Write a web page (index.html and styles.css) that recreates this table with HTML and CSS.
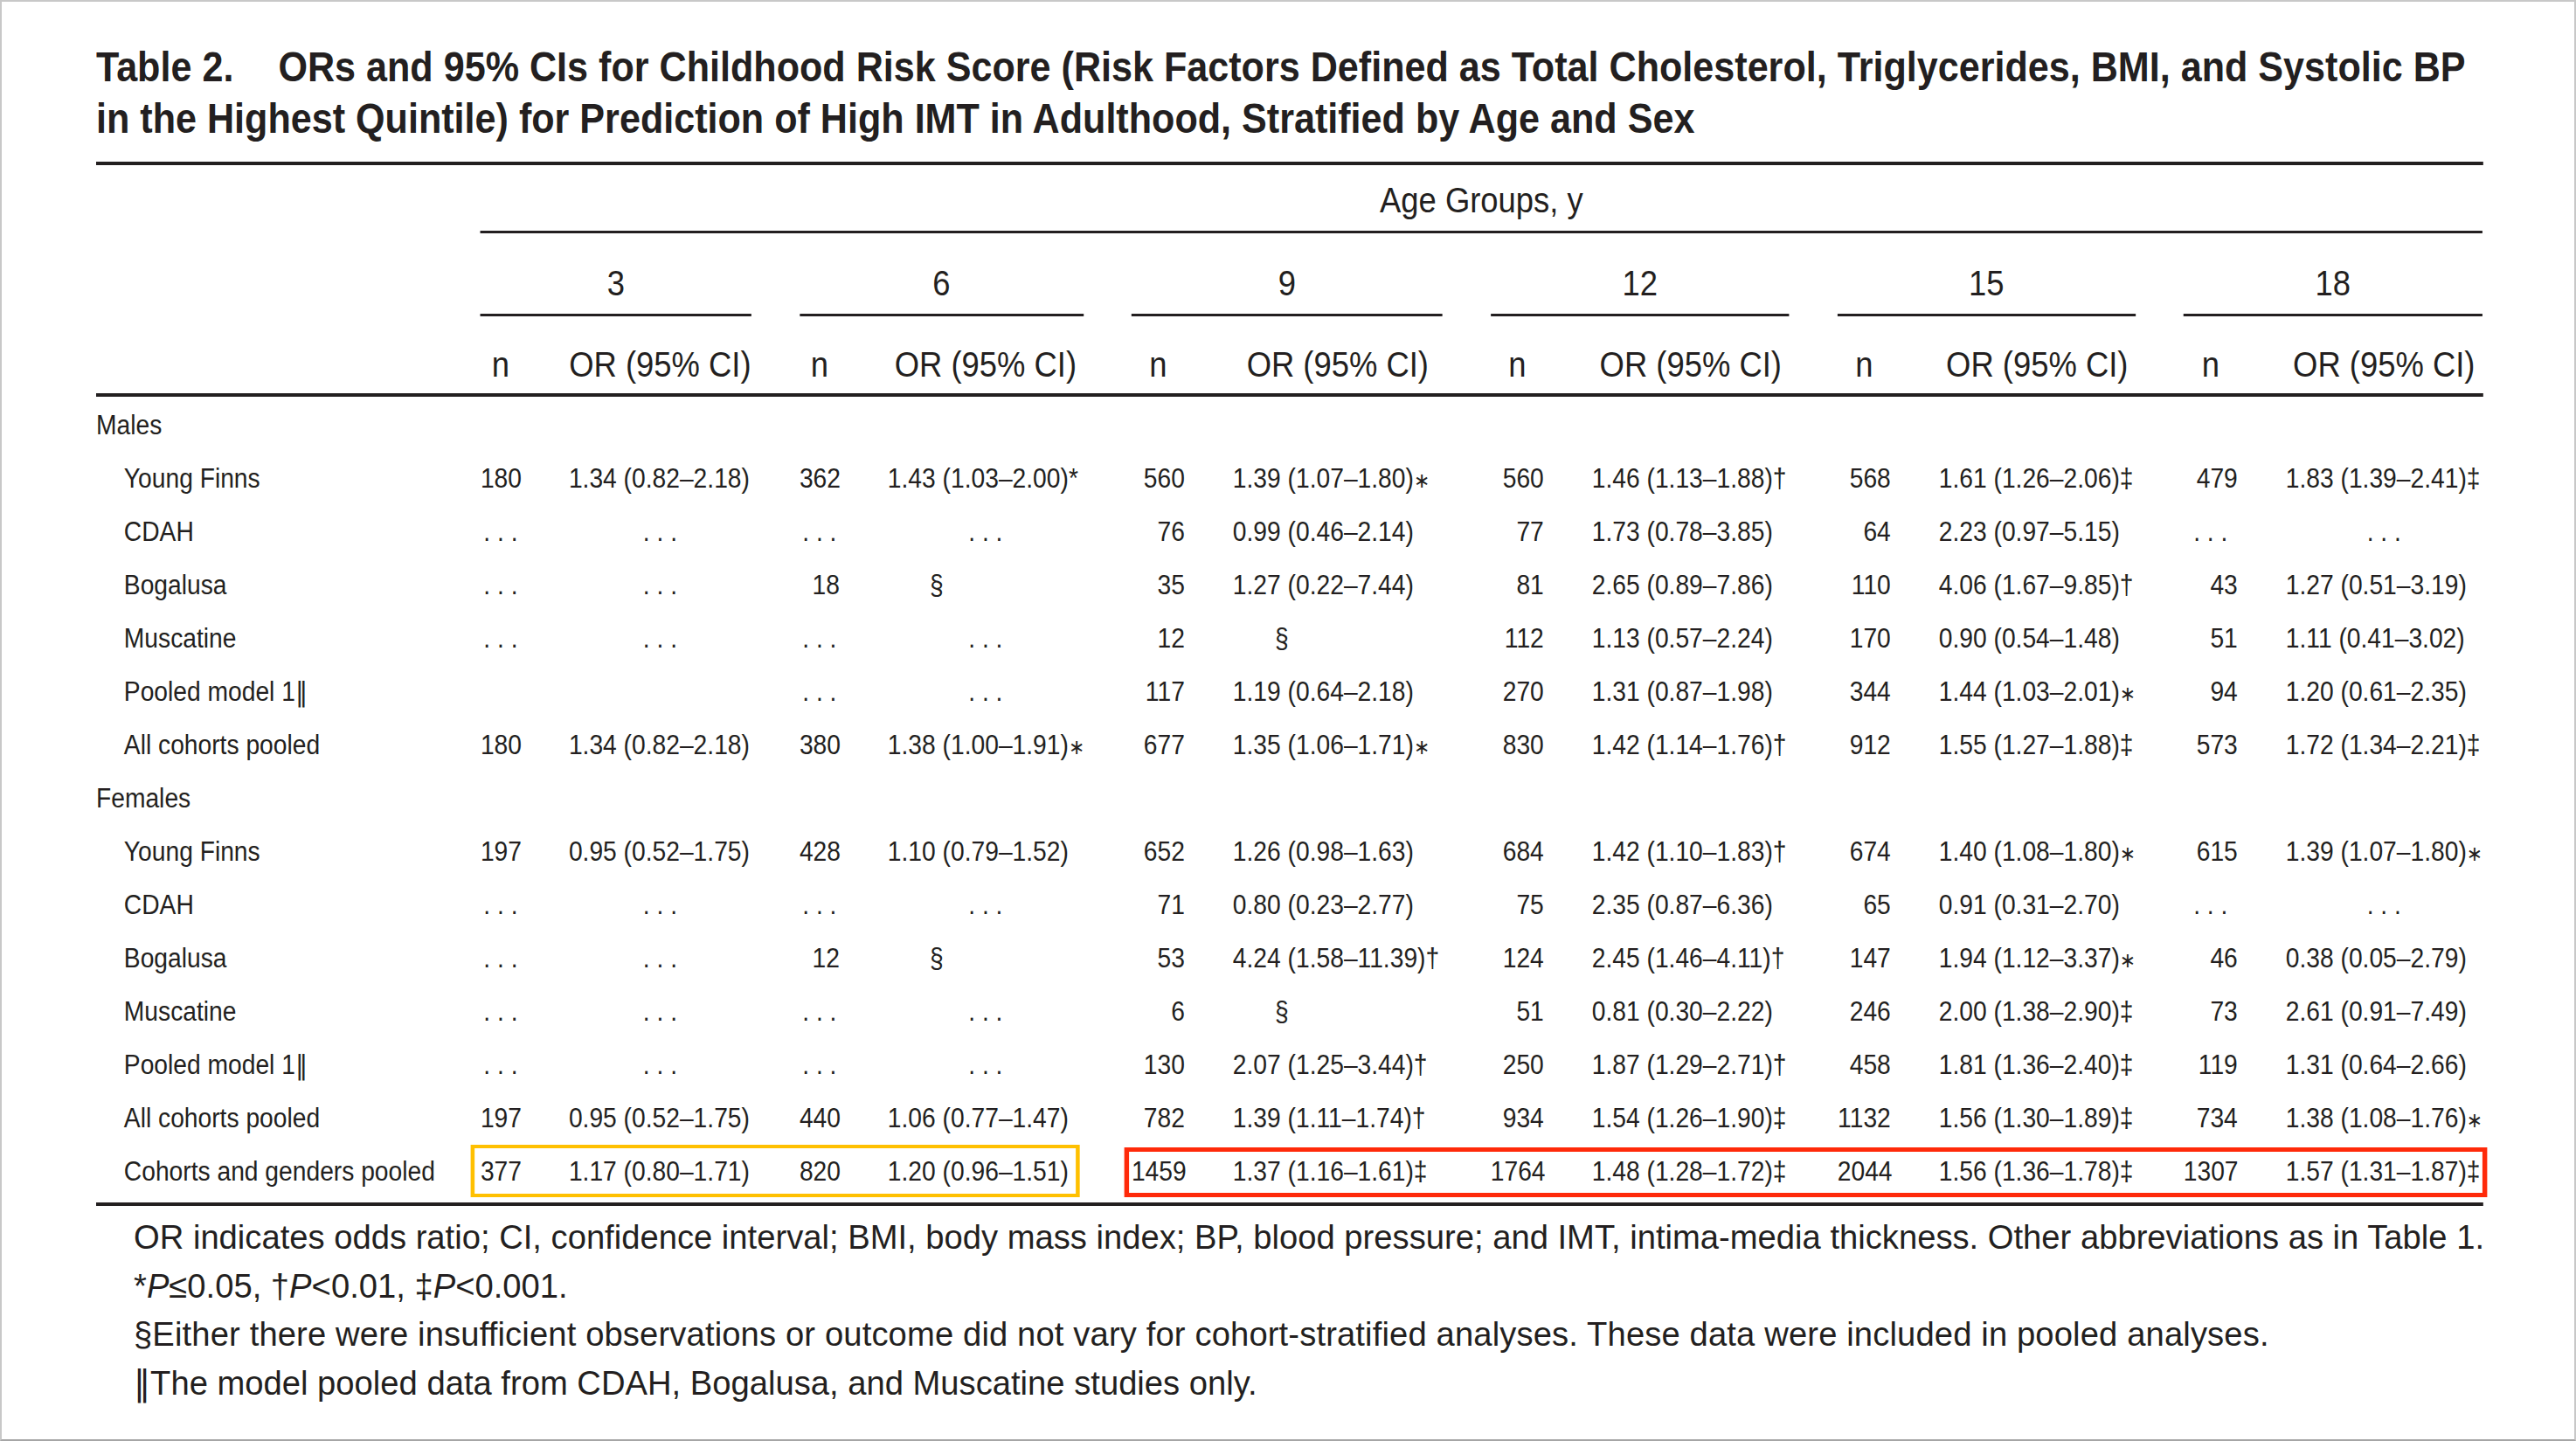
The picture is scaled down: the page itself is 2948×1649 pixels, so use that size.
FILE: index.html
```html
<!DOCTYPE html>
<html lang="en">
<head>
<meta charset="utf-8">
<title>Table 2</title>
<link rel="stylesheet" href="styles.css">
</head>
<body>
<div class="page">
  <h1 class="title">Table 2.<span class="tgap"></span>ORs and 95% CIs for Childhood Risk Score (Risk Factors Defined as Total Cholesterol, Triglycerides, BMI, and Systolic BP<br>in the Highest Quintile) for Prediction of High IMT in Adulthood, Stratified by Age and Sex</h1>

  <div class="table">
    <div class="row hdr-top">
      <div></div>
      <div class="span-all">Age Groups, y</div>
    </div>
    <div class="row hdr-age">
      <div></div>
      <div class="age">3</div>
      <div class="age">6</div>
      <div class="age">9</div>
      <div class="age">12</div>
      <div class="age">15</div>
      <div class="age">18</div>
    </div>
    <div class="row hdr-col">
      <div></div>
      <div class="ch">n</div><div class="ch">OR (95% CI)</div>
      <div class="ch">n</div><div class="ch">OR (95% CI)</div>
      <div class="ch">n</div><div class="ch">OR (95% CI)</div>
      <div class="ch">n</div><div class="ch">OR (95% CI)</div>
      <div class="ch">n</div><div class="ch">OR (95% CI)</div>
      <div class="ch">n</div><div class="ch">OR (95% CI)</div>
    </div>

    <div class="tbody">
      <div class="row"><div class="grp">Males</div></div>
      <div class="row">
        <div class="lbl">Young Finns</div>
        <div class="n">180</div><div class="or">1.34 (0.82–2.18)</div>
        <div class="n">362</div><div class="or">1.43 (1.03–2.00)*</div>
        <div class="n">560</div><div class="or">1.39 (1.07–1.80)<span class="ast">∗</span></div>
        <div class="n">560</div><div class="or">1.46 (1.13–1.88)†</div>
        <div class="n">568</div><div class="or">1.61 (1.26–2.06)‡</div>
        <div class="n">479</div><div class="or">1.83 (1.39–2.41)‡</div>
      </div>
      <div class="row">
        <div class="lbl">CDAH</div>
        <div class="n dots">.&nbsp;.&nbsp;.</div><div class="or dots">.&nbsp;.&nbsp;.</div>
        <div class="n dots">.&nbsp;.&nbsp;.</div><div class="or dots">.&nbsp;.&nbsp;.</div>
        <div class="n">76</div><div class="or">0.99 (0.46–2.14)</div>
        <div class="n">77</div><div class="or">1.73 (0.78–3.85)</div>
        <div class="n">64</div><div class="or">2.23 (0.97–5.15)</div>
        <div class="n dots">.&nbsp;.&nbsp;.</div><div class="or dots">.&nbsp;.&nbsp;.</div>
      </div>
      <div class="row">
        <div class="lbl">Bogalusa</div>
        <div class="n dots">.&nbsp;.&nbsp;.</div><div class="or dots">.&nbsp;.&nbsp;.</div>
        <div class="n">18</div><div class="or sect">§</div>
        <div class="n">35</div><div class="or">1.27 (0.22–7.44)</div>
        <div class="n">81</div><div class="or">2.65 (0.89–7.86)</div>
        <div class="n">110</div><div class="or">4.06 (1.67–9.85)†</div>
        <div class="n">43</div><div class="or">1.27 (0.51–3.19)</div>
      </div>
      <div class="row">
        <div class="lbl">Muscatine</div>
        <div class="n dots">.&nbsp;.&nbsp;.</div><div class="or dots">.&nbsp;.&nbsp;.</div>
        <div class="n dots">.&nbsp;.&nbsp;.</div><div class="or dots">.&nbsp;.&nbsp;.</div>
        <div class="n">12</div><div class="or sect">§</div>
        <div class="n">112</div><div class="or">1.13 (0.57–2.24)</div>
        <div class="n">170</div><div class="or">0.90 (0.54–1.48)</div>
        <div class="n">51</div><div class="or">1.11 (0.41–3.02)</div>
      </div>
      <div class="row">
        <div class="lbl">Pooled model 1<span class="dbar">‖</span></div>
        <div class="n"></div><div class="or"></div>
        <div class="n dots">.&nbsp;.&nbsp;.</div><div class="or dots">.&nbsp;.&nbsp;.</div>
        <div class="n">117</div><div class="or">1.19 (0.64–2.18)</div>
        <div class="n">270</div><div class="or">1.31 (0.87–1.98)</div>
        <div class="n">344</div><div class="or">1.44 (1.03–2.01)<span class="ast">∗</span></div>
        <div class="n">94</div><div class="or">1.20 (0.61–2.35)</div>
      </div>
      <div class="row">
        <div class="lbl">All cohorts pooled</div>
        <div class="n">180</div><div class="or">1.34 (0.82–2.18)</div>
        <div class="n">380</div><div class="or">1.38 (1.00–1.91)<span class="ast">∗</span></div>
        <div class="n">677</div><div class="or">1.35 (1.06–1.71)<span class="ast">∗</span></div>
        <div class="n">830</div><div class="or">1.42 (1.14–1.76)†</div>
        <div class="n">912</div><div class="or">1.55 (1.27–1.88)‡</div>
        <div class="n">573</div><div class="or">1.72 (1.34–2.21)‡</div>
      </div>

      <div class="row"><div class="grp">Females</div></div>
      <div class="row">
        <div class="lbl">Young Finns</div>
        <div class="n">197</div><div class="or">0.95 (0.52–1.75)</div>
        <div class="n">428</div><div class="or">1.10 (0.79–1.52)</div>
        <div class="n">652</div><div class="or">1.26 (0.98–1.63)</div>
        <div class="n">684</div><div class="or">1.42 (1.10–1.83)†</div>
        <div class="n">674</div><div class="or">1.40 (1.08–1.80)<span class="ast">∗</span></div>
        <div class="n">615</div><div class="or">1.39 (1.07–1.80)<span class="ast">∗</span></div>
      </div>
      <div class="row">
        <div class="lbl">CDAH</div>
        <div class="n dots">.&nbsp;.&nbsp;.</div><div class="or dots">.&nbsp;.&nbsp;.</div>
        <div class="n dots">.&nbsp;.&nbsp;.</div><div class="or dots">.&nbsp;.&nbsp;.</div>
        <div class="n">71</div><div class="or">0.80 (0.23–2.77)</div>
        <div class="n">75</div><div class="or">2.35 (0.87–6.36)</div>
        <div class="n">65</div><div class="or">0.91 (0.31–2.70)</div>
        <div class="n dots">.&nbsp;.&nbsp;.</div><div class="or dots">.&nbsp;.&nbsp;.</div>
      </div>
      <div class="row">
        <div class="lbl">Bogalusa</div>
        <div class="n dots">.&nbsp;.&nbsp;.</div><div class="or dots">.&nbsp;.&nbsp;.</div>
        <div class="n">12</div><div class="or sect">§</div>
        <div class="n">53</div><div class="or">4.24 (1.58–11.39)†</div>
        <div class="n">124</div><div class="or">2.45 (1.46–4.11)†</div>
        <div class="n">147</div><div class="or">1.94 (1.12–3.37)<span class="ast">∗</span></div>
        <div class="n">46</div><div class="or">0.38 (0.05–2.79)</div>
      </div>
      <div class="row">
        <div class="lbl">Muscatine</div>
        <div class="n dots">.&nbsp;.&nbsp;.</div><div class="or dots">.&nbsp;.&nbsp;.</div>
        <div class="n dots">.&nbsp;.&nbsp;.</div><div class="or dots">.&nbsp;.&nbsp;.</div>
        <div class="n">6</div><div class="or sect">§</div>
        <div class="n">51</div><div class="or">0.81 (0.30–2.22)</div>
        <div class="n">246</div><div class="or">2.00 (1.38–2.90)‡</div>
        <div class="n">73</div><div class="or">2.61 (0.91–7.49)</div>
      </div>
      <div class="row">
        <div class="lbl">Pooled model 1<span class="dbar">‖</span></div>
        <div class="n dots">.&nbsp;.&nbsp;.</div><div class="or dots">.&nbsp;.&nbsp;.</div>
        <div class="n dots">.&nbsp;.&nbsp;.</div><div class="or dots">.&nbsp;.&nbsp;.</div>
        <div class="n">130</div><div class="or">2.07 (1.25–3.44)†</div>
        <div class="n">250</div><div class="or">1.87 (1.29–2.71)†</div>
        <div class="n">458</div><div class="or">1.81 (1.36–2.40)‡</div>
        <div class="n">119</div><div class="or">1.31 (0.64–2.66)</div>
      </div>
      <div class="row">
        <div class="lbl">All cohorts pooled</div>
        <div class="n">197</div><div class="or">0.95 (0.52–1.75)</div>
        <div class="n">440</div><div class="or">1.06 (0.77–1.47)</div>
        <div class="n">782</div><div class="or">1.39 (1.11–1.74)†</div>
        <div class="n">934</div><div class="or">1.54 (1.26–1.90)‡</div>
        <div class="n">1132</div><div class="or">1.56 (1.30–1.89)‡</div>
        <div class="n">734</div><div class="or">1.38 (1.08–1.76)<span class="ast">∗</span></div>
      </div>
      <div class="row last-row">
        <div class="lbl">Cohorts and genders pooled</div>
        <div class="n">377</div><div class="or">1.17 (0.80–1.71)</div>
        <div class="n">820</div><div class="or">1.20 (0.96–1.51)</div>
        <div class="n">1459</div><div class="or">1.37 (1.16–1.61)‡</div>
        <div class="n">1764</div><div class="or">1.48 (1.28–1.72)‡</div>
        <div class="n">2044</div><div class="or">1.56 (1.36–1.78)‡</div>
        <div class="n">1307</div><div class="or">1.57 (1.31–1.87)‡</div>
        <div class="box box-yellow"></div>
        <div class="box box-red"></div>
      </div>
    </div>
  </div>

  <div class="notes">
    <p>OR indicates odds ratio; CI, confidence interval; BMI, body mass index; BP, blood pressure; and IMT, intima-media thickness. Other abbreviations as in Table 1.</p>
    <p>*<i>P</i>≤0.05, †<i>P</i>&lt;0.01, ‡<i>P</i>&lt;0.001.</p>
    <p class="wide">§Either there were insufficient observations or outcome did not vary for cohort-stratified analyses. These data were included in pooled analyses.</p>
    <p><span class="dbar">‖</span>The model pooled data from CDAH, Bogalusa, and Muscatine studies only.</p>
  </div>
</div>
</body>
</html>
```

FILE: styles.css
```css
* {
  box-sizing: border-box;
}

html,
body {
  margin: 0;
  padding: 0;
  background: #ffffff;
}

body {
  font-family: "Liberation Sans", Arial, Helvetica, sans-serif;
  color: #231f20;
}

.page {
  width: 2948px;
  height: 1649px;
  border: 2px solid #c8c8c8;
  border-bottom-color: #a6a6a6;
  padding: 45px 104px 0 108px;
  background: #ffffff;
  overflow: hidden;
}

/* condensed type: the original is set in a narrow Helvetica */
.title {
  margin: 0;
  font-size: 49px;
  line-height: 59px;
  font-weight: 700;
  white-space: nowrap;
  transform: scaleX(0.88);
  transform-origin: 0 0;
}

.tgap {
  display: inline-block;
  width: 58px;
}

.table {
  margin-top: 20px;
  width: 3002px;
  border-top: 4px solid #231f20;
  transform: scaleX(0.91);
  transform-origin: 0 0;
}

.row {
  display: grid;
  grid-template-columns: 423px 50.5px 229.7px 50.5px 246.2px 67px 263.7px 67px 248.4px 67px 247.3px 68.1px 247.3px;
  column-gap: 60.44px;
}

/* header */
.hdr-top .span-all {
  grid-column: 2 / -1;
  text-align: center;
  font-size: 40px;
  line-height: 40px;
  padding: 20px 0 15px;
  border-bottom: 3px solid #231f20;
}

.hdr-age .age {
  grid-column: span 2;
  text-align: center;
  font-size: 40px;
  line-height: 40px;
  padding: 37px 0 15px;
  border-bottom: 3px solid #231f20;
}

.hdr-col {
  padding: 35px 0 13px;
  border-bottom: 4px solid #231f20;
}

.hdr-col .ch {
  text-align: center;
  font-size: 40px;
  line-height: 40px;
  white-space: nowrap;
}

/* body */
.tbody {
  padding: 2px 0 5px;
  border-bottom: 4px solid #231f20;
}

.tbody .row {
  height: 61px;
  font-size: 31px;
  line-height: 61px;
  white-space: nowrap;
}

.grp {
  grid-column: 1 / -1;
}

.lbl {
  padding-left: 35px;
}

.n {
  text-align: right;
}

.or {
  text-align: left;
}

.dots {
  text-align: center;
}

.sect {
  padding-left: 53px;
}

.ast {
  font-family: "DejaVu Sans", sans-serif;
  font-size: 24px;
}

.dbar {
  font-family: "DejaVu Sans", sans-serif;
}

.last-row {
  position: relative;
}

.box {
  position: absolute;
  pointer-events: none;
}

.box-yellow {
  left: 471px;
  top: 0;
  width: 766px;
  height: 60px;
  border: 4px solid #ffc000;
  border-left-width: 5px;
  border-right-width: 5px;
}

.box-red {
  left: 1293px;
  top: 3px;
  width: 1714px;
  height: 57px;
  border: 5px solid #ff2a0a;
  border-left-width: 6px;
  border-right-width: 6px;
}

/* notes */
.notes {
  margin-top: 8px;
  padding-left: 43px;
  font-size: 38.2px;
  line-height: 55.5px;
  white-space: nowrap;
}

.notes p {
  margin: 0;
}

.notes .wide {
  letter-spacing: 0.13px;
}

.notes i {
  font-style: italic;
}
```
